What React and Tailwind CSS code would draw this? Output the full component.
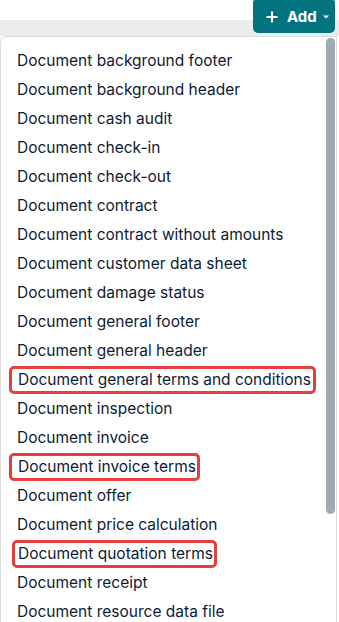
import React from 'react';

const items = [
  { label: 'Document background footer' },
  { label: 'Document background header' },
  { label: 'Document cash audit' },
  { label: 'Document check-in' },
  { label: 'Document check-out' },
  { label: 'Document contract' },
  { label: 'Document contract without amounts' },
  { label: 'Document customer data sheet' },
  { label: 'Document damage status' },
  { label: 'Document general footer' },
  { label: 'Document general header' },
  { label: 'Document general terms and conditions', mark: 'ml-[-8px] pl-[6px] pr-[2px]' },
  { label: 'Document inspection' },
  { label: 'Document invoice' },
  { label: 'Document invoice terms', mark: 'ml-[-8px] pl-[6px] pr-[1px]' },
  { label: 'Document offer' },
  { label: 'Document price calculation' },
  { label: 'Document quotation terms', mark: 'ml-[-5px] pl-[3px] pr-[1px]' },
  { label: 'Document receipt' },
  { label: 'Document resource data file' },
];

export default function App() {
  return (
    <div className="w-[339px] h-[622px] overflow-hidden bg-white font-['Inter',sans-serif]">
      {/* Toolbar */}
      <div className="relative h-[36px]">
        <div className="absolute left-0 right-0 top-[20px] h-[16px] bg-[#ececee]" />
        <button className="absolute right-[4px] top-0 h-[33px] w-[82px] rounded-b-[5px] rounded-t-[2px] bg-[#03737f] text-white text-[15px] font-bold flex items-center pl-[13px]">
          <svg width="12" height="12" viewBox="0 0 12 12" className="mr-[9px]">
            <path d="M6 0.5v11M0.5 6h11" stroke="white" strokeWidth="2.2" />
          </svg>
          <span className="leading-none">Add</span>
          <svg width="6" height="4" viewBox="0 0 6 4" className="ml-[6px]">
            <path d="M0 0.5h6L3 3.5z" fill="white" />
          </svg>
        </button>
      </div>

      {/* Dropdown */}
      <div className="relative w-[337px] h-[600px] border border-[#d9dce1] rounded-tl-[6px] bg-white flex">
        <ul className="flex-1 pt-[9px]">
          {items.map((it, i) => (
            <li key={i} className="h-[29px] flex items-center pl-[16px] text-[15.5px] text-[#0d1b34] whitespace-nowrap">
              {it.mark ? (
                <span className={`border-[3px] border-[#e53e3e] rounded-[5px] leading-[22px] ${it.mark}`}>{it.label}</span>
              ) : (
                <span>{it.label}</span>
              )}
            </li>
          ))}
        </ul>
        <div className="w-[9px] mr-[1px] mt-[1px] h-[476px] rounded-full bg-[#a2a9b1]" />
      </div>
    </div>
  );
}
